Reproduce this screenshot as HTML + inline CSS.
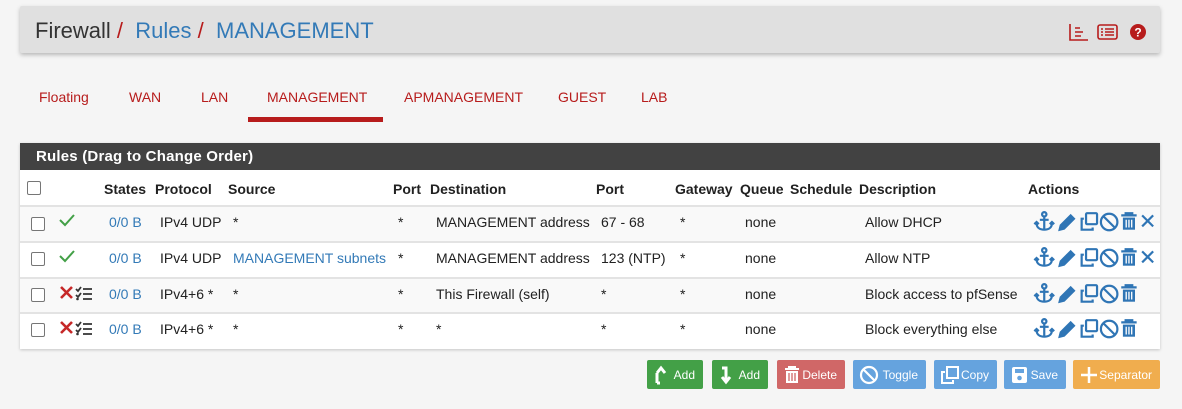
<!DOCTYPE html>
<html><head><meta charset="utf-8"><style>
*{box-sizing:border-box;margin:0;padding:0}
body{width:1182px;height:409px;background:#f5f5f5;font-family:"Liberation Sans",sans-serif;position:relative;overflow:hidden;color:#212121}
.hdr{position:absolute;left:20px;top:6px;width:1140px;height:47px;background:#e0e0e0;box-shadow:0 2px 4px rgba(0,0,0,.25);border-radius:2px}
.hdr .t{position:absolute;left:15px;top:12px;font-size:22px;color:#333}
.hdr .t .s{color:#b71c1c}.hdr .t .b{color:#337ab7}
.tab{position:absolute;top:89px;font-size:14px;color:#b71c1c}
.ul{position:absolute;left:248px;top:117px;width:135px;height:5px;background:#b71c1c}
.panel{position:absolute;left:20px;top:143px;width:1140px;height:206px;background:#fff;box-shadow:0 1px 3px rgba(0,0,0,.2)}
.ph{height:27px;background:#424242;color:#fff;font-weight:bold;font-size:15px;padding:5px 0 0 16px;letter-spacing:.2px}
.c{position:absolute;font-size:14px;white-space:nowrap}
.h{font-weight:bold;top:181px}
.row{position:absolute;left:20px;width:1140px;border-top:2px solid #e3e3e3}
.cb{position:absolute;width:14px;height:14px;border:1px solid #767676;border-radius:2px;background:#fff}
.blue{color:#337ab7}
.btn{position:absolute;top:360px;height:29px;border-radius:2px;color:#fff;font-size:12px;display:flex;align-items:center;justify-content:flex-end;padding-right:8px}
.btn svg{position:absolute;left:6px;top:5px}
</style></head><body>
<div class="hdr"><div class="t">Firewall <span class="s">/</span>&nbsp; <span class="b">Rules</span> <span class="s">/</span>&nbsp; <span class="b">MANAGEMENT</span></div>
<svg style="position:absolute;left:1048px;top:16px" width="100" height="20" viewBox="0 0 100 20" fill="none" stroke="#b71c1c" stroke-width="1.6">
<path d="M2 2v16h18M7 6h5M7 10h8M7 14h6"/>
<rect x="30" y="3" width="19" height="14" rx="2"/><path d="M33 7h2M37 7h9M33 10h2M37 10h9M33 13h2M37 13h9"/>
<circle cx="70" cy="10" r="8" fill="#b71c1c" stroke="none"/><text x="70" y="14.5" font-size="12" font-weight="bold" fill="#fff" stroke="none" text-anchor="middle" font-family="Liberation Sans">?</text>
</svg></div>
<div class="tab" style="left:39px">Floating</div>
<div class="tab" style="left:129px">WAN</div>
<div class="tab" style="left:201px">LAN</div>
<div class="tab" style="left:267px">MANAGEMENT</div>
<div class="tab" style="left:404px">APMANAGEMENT</div>
<div class="tab" style="left:558px">GUEST</div>
<div class="tab" style="left:641px">LAB</div>
<div class="ul"></div>
<div class="panel"><div class="ph">Rules (Drag to Change Order)</div></div>
<div class="row" style="top:205px;height:37px;background:#f9f9f9"></div>
<div class="row" style="top:241px;height:37px"></div>
<div class="row" style="top:277px;height:36px;background:#f9f9f9"></div>
<div class="row" style="top:312px;height:37px"></div>
<div class="cb" style="left:27px;top:181px"></div>
<div class="c h" style="left:104px">States</div><div class="c h" style="left:155px">Protocol</div><div class="c h" style="left:228px">Source</div><div class="c h" style="left:393px">Port</div><div class="c h" style="left:430px">Destination</div><div class="c h" style="left:596px">Port</div><div class="c h" style="left:675px">Gateway</div><div class="c h" style="left:740px">Queue</div><div class="c h" style="left:790px">Schedule</div><div class="c h" style="left:859px">Description</div><div class="c h" style="left:1028px">Actions</div>

<div class="cb" style="left:31px;top:217px"></div><div class="cb" style="left:31px;top:252px"></div><div class="cb" style="left:31px;top:288px"></div><div class="cb" style="left:31px;top:323px"></div>
<svg style="position:absolute;left:58px;top:213px" width="18" height="14"><path d="M2 7l5 5 9-10" fill="none" stroke="#43a047" stroke-width="2"/></svg>
<svg style="position:absolute;left:58px;top:249px" width="18" height="14"><path d="M2 7l5 5 9-10" fill="none" stroke="#43a047" stroke-width="2"/></svg>
<svg style="position:absolute;left:58px;top:285px" width="40" height="16"><path d="M3 2l11 11M14 2L3 13" stroke="#c62828" stroke-width="2.6"/><path d="M18 4l2 2 3-4M18 10l2 2 3-4M25 4h9M25 9h9M25 14h9" stroke="#333" stroke-width="1.8" fill="none"/><circle cx="19.5" cy="14" r="1.3" fill="#333"/></svg>
<svg style="position:absolute;left:58px;top:320px" width="40" height="16"><path d="M3 2l11 11M14 2L3 13" stroke="#c62828" stroke-width="2.6"/><path d="M18 4l2 2 3-4M18 10l2 2 3-4M25 4h9M25 9h9M25 14h9" stroke="#333" stroke-width="1.8" fill="none"/><circle cx="19.5" cy="14" r="1.3" fill="#333"/></svg>

<div class="c blue" style="left:109px;top:214px">0/0 B</div><div class="c" style="left:160px;top:214px">IPv4 UDP</div><div class="c" style="left:233px;top:214px">*</div><div class="c" style="left:398px;top:214px">*</div><div class="c" style="left:436px;top:214px">MANAGEMENT address</div><div class="c" style="left:601px;top:214px">67 - 68</div><div class="c" style="left:680px;top:214px">*</div><div class="c" style="left:745px;top:214px">none</div><div class="c" style="left:865px;top:214px">Allow DHCP</div>
<div class="c blue" style="left:109px;top:250px">0/0 B</div><div class="c" style="left:160px;top:250px">IPv4 UDP</div><div class="c blue" style="left:233px;top:250px">MANAGEMENT subnets</div><div class="c" style="left:398px;top:250px">*</div><div class="c" style="left:436px;top:250px">MANAGEMENT address</div><div class="c" style="left:601px;top:250px">123 (NTP)</div><div class="c" style="left:680px;top:250px">*</div><div class="c" style="left:745px;top:250px">none</div><div class="c" style="left:865px;top:250px">Allow NTP</div>
<div class="c blue" style="left:109px;top:286px">0/0 B</div><div class="c" style="left:160px;top:286px">IPv4+6 *</div><div class="c" style="left:233px;top:286px">*</div><div class="c" style="left:398px;top:286px">*</div><div class="c" style="left:436px;top:286px">This Firewall (self)</div><div class="c" style="left:601px;top:286px">*</div><div class="c" style="left:680px;top:286px">*</div><div class="c" style="left:745px;top:286px">none</div><div class="c" style="left:865px;top:286px">Block access to pfSense</div>
<div class="c blue" style="left:109px;top:321px">0/0 B</div><div class="c" style="left:160px;top:321px">IPv4+6 *</div><div class="c" style="left:233px;top:321px">*</div><div class="c" style="left:398px;top:321px">*</div><div class="c" style="left:436px;top:321px">*</div><div class="c" style="left:601px;top:321px">*</div><div class="c" style="left:680px;top:321px">*</div><div class="c" style="left:745px;top:321px">none</div><div class="c" style="left:865px;top:321px">Block everything else</div>

<svg width="0" height="0" style="position:absolute"><defs>
<g id="acts" fill="none" stroke="#2f75b5" stroke-width="2">
<circle cx="10" cy="3" r="2"/><path d="M10 5v12M6 8h8M3 11c0 4 3 6 7 6s7-2 7-6M1 12l2-2 2 2M15 12l2-2 2 2"/>
<path d="M24 17l1-4 9-9 3 3-9 9z" fill="#2f75b5"/>
<rect x="48" y="2" width="10" height="10" rx="1"/><path d="M46 7h-2v10h10v-2"/>
<circle cx="69" cy="10" r="7.5"/><path d="M64 5l10 10"/>
<path d="M80 4h14M84 4V2h6v2" /><rect x="81.5" y="6" width="11" height="11" fill="#2f75b5" stroke="none"/><path d="M84.5 8v7M87 8v7M89.5 8v7" stroke="#fff" stroke-width="1.2"/>
</g>
<path id="x" d="M99 4l10 10M109 4l-10 10" stroke="#2f75b5" stroke-width="2"/>
</defs></svg>
<svg style="position:absolute;left:1032px;top:211px" width="140" height="22" viewBox="0 0 125 20"><use href="#acts"/><use href="#x"/></svg>
<svg style="position:absolute;left:1032px;top:247px" width="140" height="22" viewBox="0 0 125 20"><use href="#acts"/><use href="#x"/></svg>
<svg style="position:absolute;left:1032px;top:283px" width="140" height="22" viewBox="0 0 125 20"><use href="#acts"/></svg>
<svg style="position:absolute;left:1032px;top:318px" width="140" height="22" viewBox="0 0 125 20"><use href="#acts"/></svg>

<div class="btn" style="left:647px;width:56px;background:#43a047"><svg width="16" height="20"><path d="M4 18V8h0M4 8l4-5 4 5M4 18h3" stroke="#fff" stroke-width="3" fill="none"/></svg>Add</div>
<div class="btn" style="left:712px;width:56px;background:#43a047"><svg width="16" height="20"><path d="M4 3h4v13M4 12l4 5 4-5" stroke="#fff" stroke-width="3" fill="none"/></svg>Add</div>
<div class="btn" style="left:777px;width:68px;background:#d06767"><svg width="18" height="20"><path d="M2 4h14M6 4V2h6v2" stroke="#fff" stroke-width="2" fill="none"/><rect x="3" y="6" width="12" height="12" fill="#fff"/><path d="M6 8v8M9 8v8M12 8v8" stroke="#d06767" stroke-width="1.3"/></svg>Delete</div>
<div class="btn" style="left:853px;width:73px;background:#65a3de"><svg width="20" height="20"><circle cx="10" cy="10" r="8" fill="none" stroke="#fff" stroke-width="2.2"/><path d="M4.5 4.5l11 11" stroke="#fff" stroke-width="2.2"/></svg>Toggle</div>
<div class="btn" style="left:934px;width:63px;background:#65a3de"><svg width="20" height="20"><rect x="7" y="2" width="11" height="11" fill="none" stroke="#fff" stroke-width="2"/><path d="M5 7H2v11h11v-3" fill="none" stroke="#fff" stroke-width="2"/></svg>Copy</div>
<div class="btn" style="left:1004px;width:62px;background:#65a3de"><svg width="20" height="20"><rect x="2" y="2" width="15" height="16" rx="2" fill="#fff"/><rect x="5" y="4" width="9" height="4" fill="#65a3de"/><circle cx="9.5" cy="13" r="2.3" fill="#65a3de"/></svg>Save</div>
<div class="btn" style="left:1073px;width:87px;background:#f0ad4e"><svg width="20" height="20"><path d="M10 2v16M2 10h16" stroke="#fff" stroke-width="2.5"/></svg>Separator</div>
</body></html>
